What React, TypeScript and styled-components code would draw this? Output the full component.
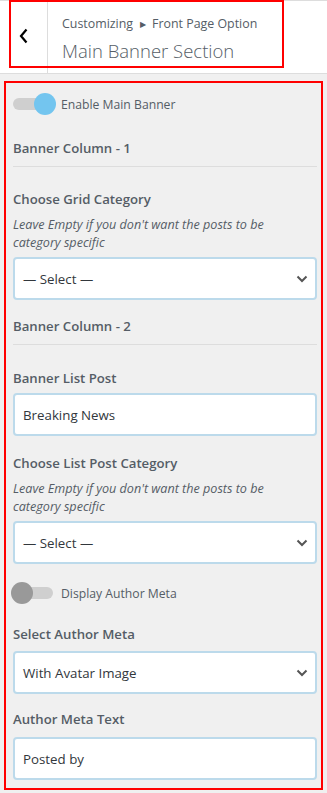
import React from "react";
import styled, { createGlobalStyle } from "styled-components";

const Global = createGlobalStyle`
  html, body { margin: 0; padding: 0; background: #f0f0f0; }
  body { font-family: "Open Sans", "Noto Sans", sans-serif; color: #555d66; }
  * { box-sizing: border-box; }
`;

const Header = styled.header`
  position: relative;
  display: flex;
  height: 74px;
  background: #fff;
  border-top: 1px solid #ddd;
  border-bottom: 1px solid #ddd;
`;

const BackButton = styled.div`
  width: 48px;
  flex: none;
  display: flex;
  align-items: center;
  justify-content: center;
  border-right: 1px solid #ddd;
  padding-bottom: 2px;
`;

const TitleBox = styled.div`
  display: flex;
  flex-direction: column;
  padding: 13px 0 0 14px;
`;

const Crumb = styled.div`
  display: flex;
  align-items: center;
  font-size: 12.4px;
  line-height: 20px;
  color: #555d66;
`;

const CrumbArrow = styled.span`
  font-size: 7.5px;
  margin: 0 6px 0 7px;
  color: #555d66;
`;

const Title = styled.div`
  font-size: 18.5px;
  font-weight: 300;
  line-height: 28px;
  margin-top: 3px;
  color: #555d66;
`;

const Annotation = styled.div`
  position: absolute;
  left: 9px;
  top: -1px;
  width: 275px;
  height: 68px;
  border: 2px solid #ff0000;
  pointer-events: none;
`;

const Panel = styled.section`
  margin: 7px 4px 3px 4px;
  border: 2px solid #ff0000;
  padding: 10px 4px 8px 7px;
  display: flex;
  flex-direction: column;
`;

const ToggleRow = styled.div<{ $mb: number }>`
  display: flex;
  align-items: center;
  height: 22px;
  margin-bottom: ${(p) => p.$mb}px;
`;

const Track = styled.div`
  position: relative;
  width: 40px;
  height: 12px;
  border-radius: 6px;
  background: #cfcfcf;
  margin: 0 8px 0 0;
  flex: none;
`;

const Knob = styled.div<{ $on: boolean }>`
  position: absolute;
  top: -5px;
  left: ${(p) => (p.$on ? 21 : -2)}px;
  width: 22px;
  height: 22px;
  border-radius: 50%;
  background: ${(p) => (p.$on ? "#73c5ef" : "#999999")};
`;

const ToggleLabel = styled.span`
  font-size: 12.2px;
  color: #555d66;
`;

const SectionHeading = styled.div<{ $mb?: number }>`
  font-size: 13.2px;
  font-weight: 600;
  line-height: 20px;
  padding-bottom: 8px;
  border-bottom: 1px solid #dddddd;
  margin-bottom: ${(p) => p.$mb ?? 22}px;
`;

const Control = styled.div<{ $mb?: number }>`
  display: flex;
  flex-direction: column;
  margin-bottom: ${(p) => p.$mb ?? 16}px;
`;

const Label = styled.div<{ $mb?: number }>`
  font-size: 13.2px;
  font-weight: 600;
  line-height: 20px;
  margin-bottom: ${(p) => p.$mb ?? 6}px;
`;

const Desc = styled.div`
  font-size: 12.6px;
  font-style: italic;
  line-height: 18px;
  margin-bottom: 5px;
  padding-right: 40px;
`;

const Field = styled.div`
  display: flex;
  align-items: center;
  justify-content: space-between;
  height: 43px;
  background: #fff;
  border: 2px solid #bcdaeb;
  border-radius: 4px;
  padding: 0 7px 0 8px;
  font-size: 13.3px;
  color: #32373c;
`;

const Toggle = ({ on, label, mb }: { on: boolean; label: string; mb: number }) => (
  <ToggleRow $mb={mb}>
    <Track>
      <Knob $on={on} />
    </Track>
    <ToggleLabel>{label}</ToggleLabel>
  </ToggleRow>
);

const Chevron = () => (
  <svg width="12" height="8" viewBox="0 0 12 8">
    <path d="M1.5 1.5 L6 6 L10.5 1.5" fill="none" stroke="#555" strokeWidth="2" />
  </svg>
);

const Select = ({ value }: { value: string }) => (
  <Field>
    <span>{value}</span>
    <Chevron />
  </Field>
);

export default function App() {
  return (
    <>
      <Global />
      <Header>
        <BackButton>
          <svg width="10" height="16" viewBox="0 0 10 16">
            <path d="M7.5 1.5 L2 8 L7.5 14.5" fill="none" stroke="#000" strokeWidth="2.2" />
          </svg>
        </BackButton>
        <TitleBox>
          <Crumb>
            Customizing<CrumbArrow>▶</CrumbArrow>Front Page Option
          </Crumb>
          <Title>Main Banner Section</Title>
        </TitleBox>
        <Annotation />
      </Header>
      <Panel>
        <Toggle on label="Enable Main Banner" mb={23} />
        <SectionHeading>Banner Column - 1</SectionHeading>
        <Control>
          <Label $mb={7}>Choose Grid Category</Label>
          <Desc>Leave Empty if you don't want the posts to be category specific</Desc>
          <Select value="— Select —" />
        </Control>
        <SectionHeading $mb={23}>Banner Column - 2</SectionHeading>
        <Control $mb={17}>
          <Label $mb={5}>Banner List Post</Label>
          <Field>Breaking News</Field>
        </Control>
        <Control $mb={18}>
          <Label $mb={7}>Choose List Post Category</Label>
          <Desc>Leave Empty if you don't want the posts to be category specific</Desc>
          <Select value="— Select —" />
        </Control>
        <Toggle on={false} label="Display Author Meta" mb={20} />
        <Control $mb={15}>
          <Label $mb={7}>Select Author Meta</Label>
          <Select value="With Avatar Image" />
        </Control>
        <Control $mb={0}>
          <Label $mb={8}>Author Meta Text</Label>
          <Field>Posted by</Field>
        </Control>
      </Panel>
    </>
  );
}
